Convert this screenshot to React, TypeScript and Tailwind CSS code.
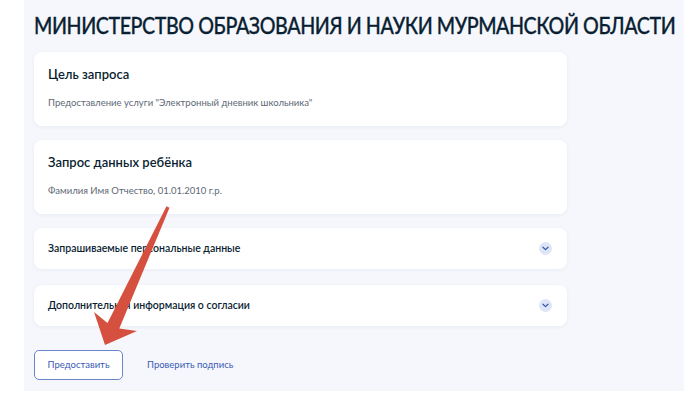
import React from 'react'

const Chevron = () => (
  <span className="flex h-[13px] w-[13px] items-center justify-center rounded-full bg-[#dde5f6]">
    <svg width="7" height="5" viewBox="0 0 7 5" fill="none">
      <path d="M1 1.2l2.5 2.4L6 1.2" stroke="#3a5bb0" strokeWidth="1.3" strokeLinecap="round" strokeLinejoin="round" />
    </svg>
  </span>
)

const InfoCard = ({ title, text }: { title: string; text: string }) => (
  <div className="flex h-[74px] flex-col rounded-[8px] bg-white px-[14px] pt-[14px] shadow-[0_1px_4px_rgba(30,50,100,0.06)]">
    <div className="text-[13px] leading-[16px] font-semibold text-[#0b1f33]">{title}</div>
    <div className="mt-[15px] text-[9.5px] leading-[12px] text-[#5d6875]">{text}</div>
  </div>
)

const AccordionRow = ({ title }: { title: string }) => (
  <div className="flex h-[41px] items-center justify-between rounded-[8px] bg-white pr-[15px] pl-[14px] shadow-[0_1px_4px_rgba(30,50,100,0.06)]">
    <span className="text-[10.5px] font-semibold text-[#0b1f33]">{title}</span>
    <Chevron />
  </div>
)

const App = () => {
  return (
    <div className="relative h-[394px] w-[700px] overflow-hidden bg-white font-['Lato',sans-serif]">
      <div className="ml-[24px] h-[391px] w-[660px] bg-[#f5f7fc] pt-[10px] pl-[10px]">
        <h1 className="inline-block origin-left scale-x-[0.855] text-[23px] leading-[30px] font-medium tracking-[-0.5px] whitespace-nowrap text-[#0b1f33] [-webkit-text-stroke:0.3px_#0b1f33]">
          МИНИСТЕРСТВО ОБРАЗОВАНИЯ И НАУКИ МУРМАНСКОЙ ОБЛАСТИ
        </h1>

        <div className="mt-[12px] flex w-[533px] flex-col gap-[14px]">
          <InfoCard title="Цель запроса" text={'Предоставление услуги "Электронный дневник школьника"'} />
          <InfoCard title="Запрос данных ребёнка" text="Фамилия Имя Отчество, 01.01.2010 г.р." />
          <AccordionRow title="Запрашиваемые персональные данные" />
          <div className="mt-[2px]">
            <AccordionRow title="Дополнительная информация о согласии" />
          </div>
        </div>

        <div className="mt-[24px] flex items-center gap-[24px]">
          <button className="h-[30px] w-[89px] rounded-[5px] border border-[#6a86c9] bg-white text-[9.5px] text-[#3b5bb5]">
            Предоставить
          </button>
          <span className="text-[9.5px] text-[#3b5bb5]">Проверить подпись</span>
        </div>
      </div>

      {/* red pointer arrow drawn over the page */}
      <svg className="pointer-events-none absolute top-0 left-0" width="700" height="394" viewBox="0 0 700 394">
        <polygon
          points="166.5,206.3 169.5,207.7 119.3,328.5 137,331 105,345 94,312 107.5,323.1"
          fill="#d5503f"
        />
      </svg>
    </div>
  )
}

export default App
